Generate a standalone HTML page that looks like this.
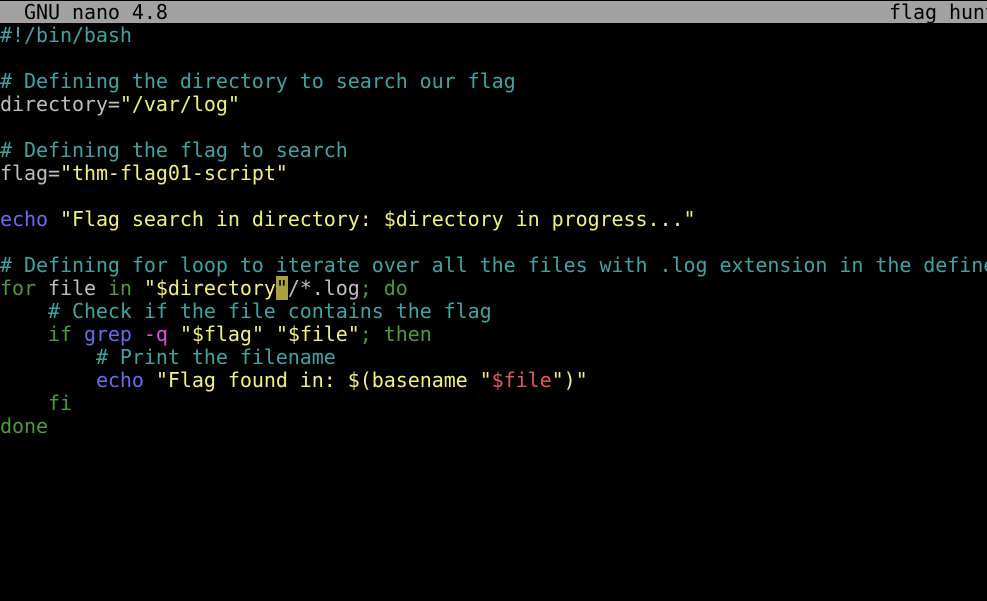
<!DOCTYPE html>
<html><head><meta charset="utf-8"><style>
html,body{margin:0;padding:0;background:#000;width:987px;height:601px;overflow:hidden}
body{font-family:"DejaVu Sans Mono","Liberation Mono",monospace;font-size:20px;letter-spacing:-0.05px;color:#bdbdbd;position:relative}
.bar{position:absolute;left:0;top:1px;width:987px;height:22px;background:#a2a2a2;color:#000;line-height:22px;white-space:pre;overflow:hidden}
pre{position:absolute;left:0;top:24px;width:987px;overflow:hidden;margin:0;font:inherit;line-height:23px;white-space:pre}
.c{color:#3fa3a3}.s{color:#f2f07a}.k{color:#4e9a3a}.b{color:#6a6af0}.m{color:#e050e0}.r{color:#e05a5a}
.cur{background:#a8a040;color:#000}
</style></head><body>
<div class="bar"><span style="position:absolute;left:24px">GNU nano 4.8</span><span style="position:absolute;left:889px">flag_hunt</span></div>
<pre><span class="c">#!/bin/bash</span>

<span class="c"># Defining the directory to search our flag</span>
directory=<span class="s">"/var/log"</span>

<span class="c"># Defining the flag to search</span>
flag=<span class="s">"thm-flag01-script"</span>

<span class="b">echo</span> <span class="s">"Flag search in directory: $directory in progress..."</span>

<span class="c"># Defining for loop to iterate over all the files with .log extension in the defined directory</span>
<span class="k">for</span> file <span class="k">in</span> <span class="s">"$directory</span><span class="cur">"</span>/*.log<span class="k">; do</span>
    <span class="c"># Check if the file contains the flag</span>
    <span class="k">if</span> <span class="b">grep</span> <span class="m">-q</span> <span class="s">"$flag"</span> <span class="s">"$file"</span><span class="k">; then</span>
        <span class="c"># Print the filename</span>
        <span class="b">echo</span> <span class="s">"Flag found in: $(basename "</span><span class="r">$file</span><span class="s">")"</span>
    <span class="k">fi</span>
<span class="k">done</span></pre>
</body></html>
